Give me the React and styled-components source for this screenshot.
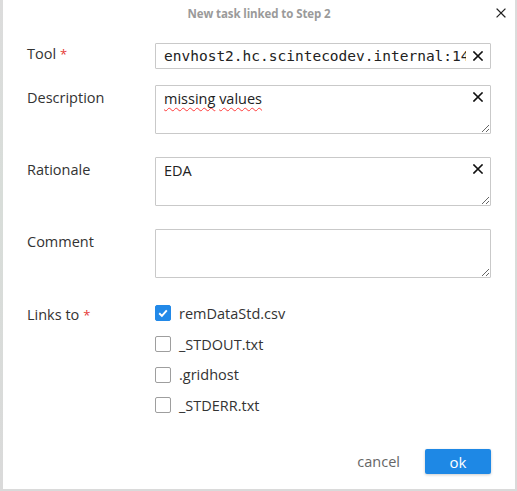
import React from "react";
import styled, { createGlobalStyle } from "styled-components";

const Global = createGlobalStyle`
  html, body { margin: 0; padding: 0; background: #dadada; }
  body { font-family: "Open Sans", "Noto Sans", sans-serif; color: #333; }
  * { box-sizing: border-box; }
`;

const Backdrop = styled.div`
  width: 517px;
  height: 491px;
  padding: 0 2px 2px 3px;
  background: linear-gradient(#dcdcdc, #d8ddd9 40%, #dadada);
`;

const Dialog = styled.div`
  width: 512px;
  height: 489px;
  background: #fff;
  display: flex;
  flex-direction: column;
`;

const Header = styled.div`
  height: 26px;
  display: flex;
  align-items: center;
  justify-content: center;
  position: relative;
`;

const Title = styled.div`
  font-size: 11.5px;
  font-weight: 700;
  color: #9a9a9a;
  letter-spacing: -0.1px;
`;

const CloseBtn = styled.button`
  position: absolute;
  right: 8px;
  top: 7px;
  width: 12px;
  height: 12px;
  padding: 0;
  border: 0;
  background: none;
  display: flex;
  align-items: center;
  justify-content: center;
`;

const Form = styled.div`
  padding: 17px 24px 0 24px;
  display: flex;
  flex-direction: column;
  flex: 1;
`;

const Row = styled.div`
  display: flex;
  align-items: flex-start;
  margin-bottom: ${(p) => p.$gap}px;
`;

const Label = styled.div`
  width: 128px;
  flex: none;
  font-size: 14.5px;
  line-height: 22px;
  padding-top: ${(p) => p.$top || 0}px;
  color: #333;
`;

const Req = styled.span`
  color: #e53935;
  margin-left: 4px;
  font-size: 13px;
`;

const Field = styled.div`
  position: relative;
  width: 336px;
  border: 1px solid #c9c9c9;
  border-radius: 1px;
  background: #fff;
`;

const InputBox = styled(Field)`
  height: 26px;
  display: flex;
  align-items: center;
  padding: 0 24px 0 8px;
  overflow: hidden;
`;

const MonoText = styled.div`
  font-family: "DejaVu Sans Mono", "Liberation Mono", monospace;
  font-size: 14.5px;
  white-space: nowrap;
  overflow: hidden;
  color: #222;
`;

const AreaBox = styled(Field)`
  height: 49px;
  padding: 3px 26px 0 8px;
  font-size: 14.5px;
  line-height: 20px;
  color: #222;
  resize: both;
  overflow: hidden;
`;

const Misspelled = styled.span`
  text-decoration: underline wavy #ff3b3b;
  text-decoration-thickness: 1px;
  text-underline-offset: 3px;
`;

const Clear = styled.span`
  position: absolute;
  right: 7px;
  top: ${(p) => p.$top}px;
  width: 10px;
  height: 10px;
  display: flex;
`;

const List = styled.div`
  display: flex;
  flex-direction: column;
`;

const CheckRow = styled.label`
  display: flex;
  align-items: center;
  height: 30.7px;
  gap: 8px;
  font-size: 14.5px;
  color: #333;
`;

const Box = styled.span`
  width: 16px;
  height: 16px;
  border-radius: 2px;
  flex: none;
  display: flex;
  align-items: center;
  justify-content: center;
  background: ${(p) => (p.$on ? "#2289e8" : "#fff")};
  border: 1px solid ${(p) => (p.$on ? "#2289e8" : "#9e9e9e")};
`;

const Footer = styled.div`
  margin-top: auto;
  display: flex;
  justify-content: flex-end;
  align-items: center;
  gap: 25px;
  padding: 0 24px 15px 0;
`;

const Cancel = styled.button`
  border: 0;
  background: none;
  font-family: inherit;
  font-size: 14.5px;
  color: #666;
  padding: 0;
`;

const Ok = styled.button`
  width: 66px;
  height: 25px;
  border: 0;
  border-radius: 2px;
  background: #1e88e5;
  color: #fff;
  font-family: inherit;
  font-size: 15px;
  box-shadow: 0 1px 3px rgba(0, 0, 0, 0.2);
  padding: 0;
`;

const X = ({ size = 10, w = 1.6, color = "#111" }) => (
  <svg width={size} height={size} viewBox="0 0 10 10">
    <path d="M1 1 L9 9 M9 1 L1 9" stroke={color} strokeWidth={w} strokeLinecap="square" />
  </svg>
);

const Check = () => (
  <svg width="12" height="12" viewBox="0 0 12 12">
    <path d="M2.2 6.3 L4.9 8.9 L9.8 3.3" fill="none" stroke="#fff" strokeWidth="1.9" />
  </svg>
);

const links = [
  { name: "remDataStd.csv", on: true },
  { name: "_STDOUT.txt", on: false },
  { name: ".gridhost", on: false },
  { name: "_STDERR.txt", on: false },
];

export default function App() {
  return (
    <>
      <Global />
      <Backdrop>
        <Dialog>
          <Header>
            <Title>New task linked to Step 2</Title>
            <CloseBtn>
              <X size={10} w={1.2} color="#222" />
            </CloseBtn>
          </Header>
          <Form>
            <Row $gap={16}>
              <Label>
                Tool<Req>*</Req>
              </Label>
              <InputBox>
                <MonoText>envhost2.hc.scintecodev.internal:14443</MonoText>
                <Clear $top={7}>
                  <X />
                </Clear>
              </InputBox>
            </Row>
            <Row $gap={23}>
              <Label $top={2}>Description</Label>
              <AreaBox>
                <Misspelled>missing</Misspelled> <Misspelled>values</Misspelled>
                <Clear $top={6}>
                  <X />
                </Clear>
              </AreaBox>
            </Row>
            <Row $gap={23}>
              <Label $top={2}>Rationale</Label>
              <AreaBox>
                EDA
                <Clear $top={6}>
                  <X />
                </Clear>
              </AreaBox>
            </Row>
            <Row $gap={20}>
              <Label $top={2}>Comment</Label>
              <AreaBox />
            </Row>
            <Row $gap={0}>
              <Label $top={6}>
                Links to<Req>*</Req>
              </Label>
              <List>
                {links.map((l) => (
                  <CheckRow key={l.name}>
                    <Box $on={l.on}>{l.on && <Check />}</Box>
                    {l.name}
                  </CheckRow>
                ))}
              </List>
            </Row>
          </Form>
          <Footer>
            <Cancel>cancel</Cancel>
            <Ok>ok</Ok>
          </Footer>
        </Dialog>
      </Backdrop>
    </>
  );
}
